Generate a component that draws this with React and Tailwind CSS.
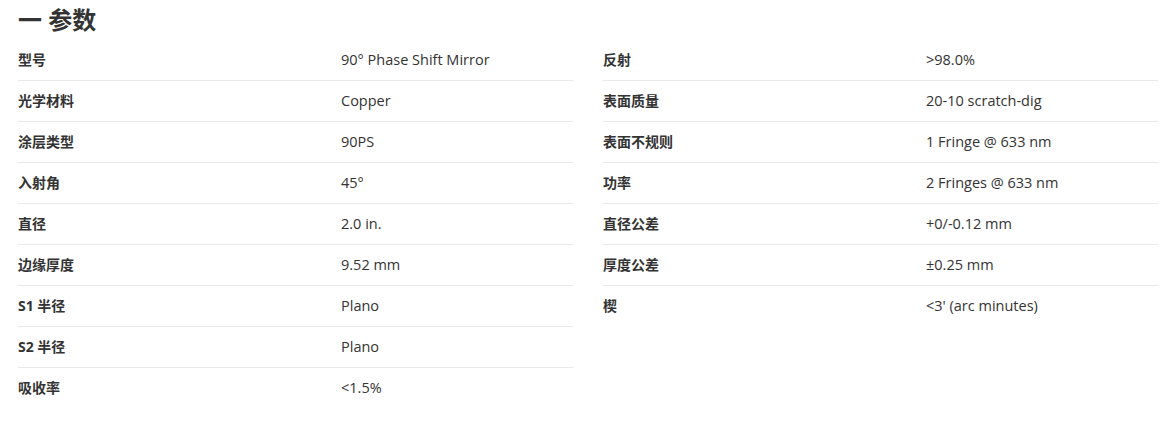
import React from "react";

const left = [
  ["型号", "90° Phase Shift Mirror"],
  ["光学材料", "Copper"],
  ["涂层类型", "90PS"],
  ["入射角", "45°"],
  ["直径", "2.0 in."],
  ["边缘厚度", "9.52 mm"],
  ["S1 半径", "Plano"],
  ["S2 半径", "Plano"],
  ["吸收率", "<1.5%"],
];
const right = [
  ["反射", ">98.0%"],
  ["表面质量", "20-10 scratch-dig"],
  ["表面不规则", "1 Fringe @ 633 nm"],
  ["功率", "2 Fringes @ 633 nm"],
  ["直径公差", "+0/-0.12 mm"],
  ["厚度公差", "±0.25 mm"],
  ["楔", "<3' (arc minutes)"],
];

function Table({ rows }) {
  return (
    <div className="flex flex-col">
      {rows.map(([k, v], i) => (
        <div
          key={k}
          className={
            "grid grid-cols-[323px_1fr] items-center h-[41px] pb-[1px] " +
            (i < rows.length - 1 ? "border-b border-[#e9e9e9]" : "")
          }
        >
          <div className="font-bold text-[14px] text-[#333] leading-[20px]">{k}</div>
          <div className="text-[14.5px] text-[#333] leading-[20px]">{v}</div>
        </div>
      ))}
    </div>
  );
}

export default function App() {
  return (
    <div
      className="w-[1174px] h-[433px] bg-white pl-[18px] pr-[16px]"
      style={{ fontFamily: '"Open Sans", "Noto Sans CJK SC", sans-serif' }}
    >
      <div className="h-[40px] flex items-center pb-[1px]">
        <h2 className="text-[24px] font-bold text-[#333] leading-none">一 参数</h2>
      </div>
      <div className="grid grid-cols-2 gap-[30px]">
        <Table rows={left} />
        <Table rows={right} />
      </div>
    </div>
  );
}
